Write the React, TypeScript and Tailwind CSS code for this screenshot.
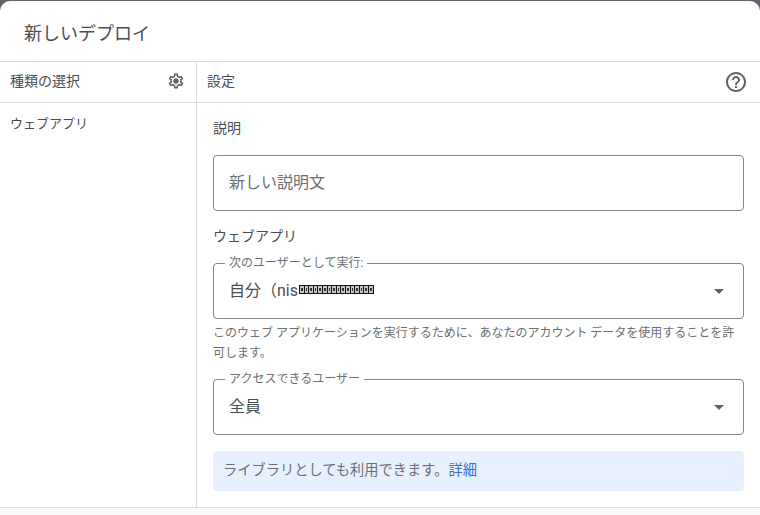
import React from 'react';

const font = "font-['Roboto','Noto_Sans_CJK_JP',sans-serif]";

const GearIcon = () => (
  <svg className="mb-[2px]" width="18" height="18" viewBox="0 0 24 24" fill="#5f6368">
    <path d="M19.43 12.98c.04-.32.07-.64.07-.98 0-.34-.03-.66-.07-.98l2.11-1.65c.19-.15.24-.42.12-.64l-2-3.46c-.09-.16-.26-.25-.44-.25-.06 0-.12.01-.17.03l-2.49 1c-.52-.4-1.08-.73-1.69-.98l-.38-2.65C14.46 2.18 14.25 2 14 2h-4c-.25 0-.46.18-.49.42l-.38 2.65c-.61.25-1.17.59-1.69.98l-2.49-1c-.06-.02-.12-.03-.18-.03-.17 0-.34.09-.43.25l-2 3.46c-.13.22-.07.49.12.64l2.11 1.65c-.04.32-.07.65-.07.98 0 .33.03.66.07.98l-2.11 1.65c-.19.15-.24.42-.12.64l2 3.46c.09.16.26.25.44.25.06 0 .12-.01.17-.03l2.49-1c.52.4 1.08.73 1.69.98l.38 2.65c.03.24.24.42.49.42h4c.25 0 .46-.18.49-.42l.38-2.65c.61-.25 1.17-.59 1.69-.98l2.49 1c.06.02.12.03.18.03.17 0 .34-.09.43-.25l2-3.46c.12-.22.07-.49-.12-.64l-2.11-1.65zm-1.98-1.71c.04.31.05.52.05.73 0 .21-.02.43-.05.73l-.14 1.13.89.7 1.08.84-.7 1.21-1.27-.51-1.04-.42-.9.68c-.43.32-.84.56-1.25.73l-1.06.43-.16 1.13-.2 1.35h-1.4l-.19-1.35-.16-1.13-1.06-.43c-.43-.18-.83-.41-1.23-.71l-.91-.7-1.06.43-1.27.51-.7-1.21 1.08-.84.89-.7-.14-1.13c-.03-.31-.05-.54-.05-.74s.02-.43.05-.73l.14-1.13-.89-.7-1.08-.84.7-1.21 1.27.51 1.04.42.9-.68c.43-.32.84-.56 1.25-.73l1.06-.43.16-1.13.2-1.35h1.39l.19 1.35.16 1.13 1.06.43c.43.18.83.41 1.23.71l.91.7 1.06-.43 1.27-.51.7 1.21-1.07.85-.89.7.14 1.13z" />
    <circle cx="12" cy="12" r="3.6" />
  </svg>
);

const HelpIcon = () => (
  <svg width="24" height="24" viewBox="0 0 24 24" fill="#5f6368">
    <path d="M11 18h2v-2h-2v2zm1-16C6.48 2 2 6.48 2 12s4.48 10 10 10 10-4.48 10-10S17.52 2 12 2zm0 18c-4.41 0-8-3.59-8-8s3.59-8 8-8 8 3.59 8 8-3.59 8-8 8zm0-14c-2.21 0-4 1.79-4 4h2c0-1.1.9-2 2-2s2 .9 2 2c0 2-3 1.75-3 5h2c0-2.25 3-2.5 3-5 0-2.21-1.79-4-4-4z" />
  </svg>
);

const Caret = () => <div className="w-0 h-0 border-x-[5px] border-x-transparent border-t-[5px] border-t-[#5f6368]" />;

// masked part of the address in the screenshot
const Redacted = () => (
  <span className="inline-flex gap-[1px] bg-[#111] p-[1px] mb-[4px] ml-[1px]">
    {Array.from({ length: 16 }).map((_, i) => (
      <span key={i} className="flex items-center justify-center w-[3.6px] h-[7px] bg-[#c9c9c9]">
        <span className="block w-[1.6px] h-[3px] bg-[#333]" />
      </span>
    ))}
  </span>
);

const SelectBox = ({ label, children }: { label: string; children: React.ReactNode }) => (
  <div className="relative h-14 border border-[#80868b] rounded-[4px] flex items-center justify-between pl-[15px] pr-[19px]">
    <span className="absolute -top-[8px] left-[11px] bg-white px-1 text-[12px] leading-[14px] text-[#6b6f73]">{label}</span>
    <div className="flex items-center text-base text-[#4a4d50]">{children}</div>
    <Caret />
  </div>
);

export default function App() {
  return (
    <div className={`w-[760px] h-[515px] bg-[#5f6368] overflow-hidden ${font}`}>
      <div className="mt-[1px] h-[514px] bg-white rounded-t-[10px] flex flex-col">
        <div className="h-[60px] shrink-0 flex items-center pl-6 pt-[6px] text-lg text-[#4a4d50]">新しいデプロイ</div>
        <div className="h-[447px] shrink-0 flex border-y border-[#dadce0]">
          <div className="w-[197px] shrink-0 border-r border-[#dadce0] flex flex-col">
            <div className="h-[41px] shrink-0 border-b border-[#dadce0] flex items-center justify-between pl-[10px] pr-[11px] text-sm text-[#4a4d50]">
              <span className="mb-[2px]">種類の選択</span>
              <GearIcon />
            </div>
            <div className="pl-[10px] pt-[12px] text-[13px] leading-[18px] text-[#4a4d50]">ウェブアプリ</div>
          </div>
          <div className="flex-1 flex flex-col">
            <div className="h-[41px] shrink-0 border-b border-[#dadce0] flex items-center justify-between pl-[10px] pr-3 text-sm text-[#4a4d50]">
              <span className="mb-[2px]">設定</span>
              <HelpIcon />
            </div>
            <div className="px-4 pt-[15px] flex flex-col">
              <div className="text-sm leading-[20px] text-[#4a4d50]">説明</div>
              <div className="mt-[17px] h-14 border border-[#80868b] rounded-[4px] flex items-center pl-[15px] text-base text-[#6b6f73]">新しい説明文</div>
              <div className="mt-[15px] text-sm leading-[20px] text-[#4a4d50]">ウェブアプリ</div>
              <div className="mt-[17px]">
                <SelectBox label="次のユーザーとして実行:">
                  <span>自分（nis</span>
                  <Redacted />
                </SelectBox>
              </div>
              <p className="mt-[4px] text-[12px] leading-[20px] text-[#6b6f73]">このウェブ アプリケーションを実行するために、あなたのアカウント データを使用することを許可します。</p>
              <div className="mt-[16px]">
                <SelectBox label="アクセスできるユーザー">全員</SelectBox>
              </div>
              <div className="mt-[16px] h-10 bg-[#e8f0fe] rounded-[4px] flex items-center pl-[10px] text-[14.25px] text-[#6b6f73]">
                <span>ライブラリとしても利用できます。</span>
                <a className="text-[#3b6fc9]">詳細</a>
              </div>
            </div>
          </div>
        </div>
        <div className="flex-1 bg-[#fafafa]" />
      </div>
    </div>
  );
}
